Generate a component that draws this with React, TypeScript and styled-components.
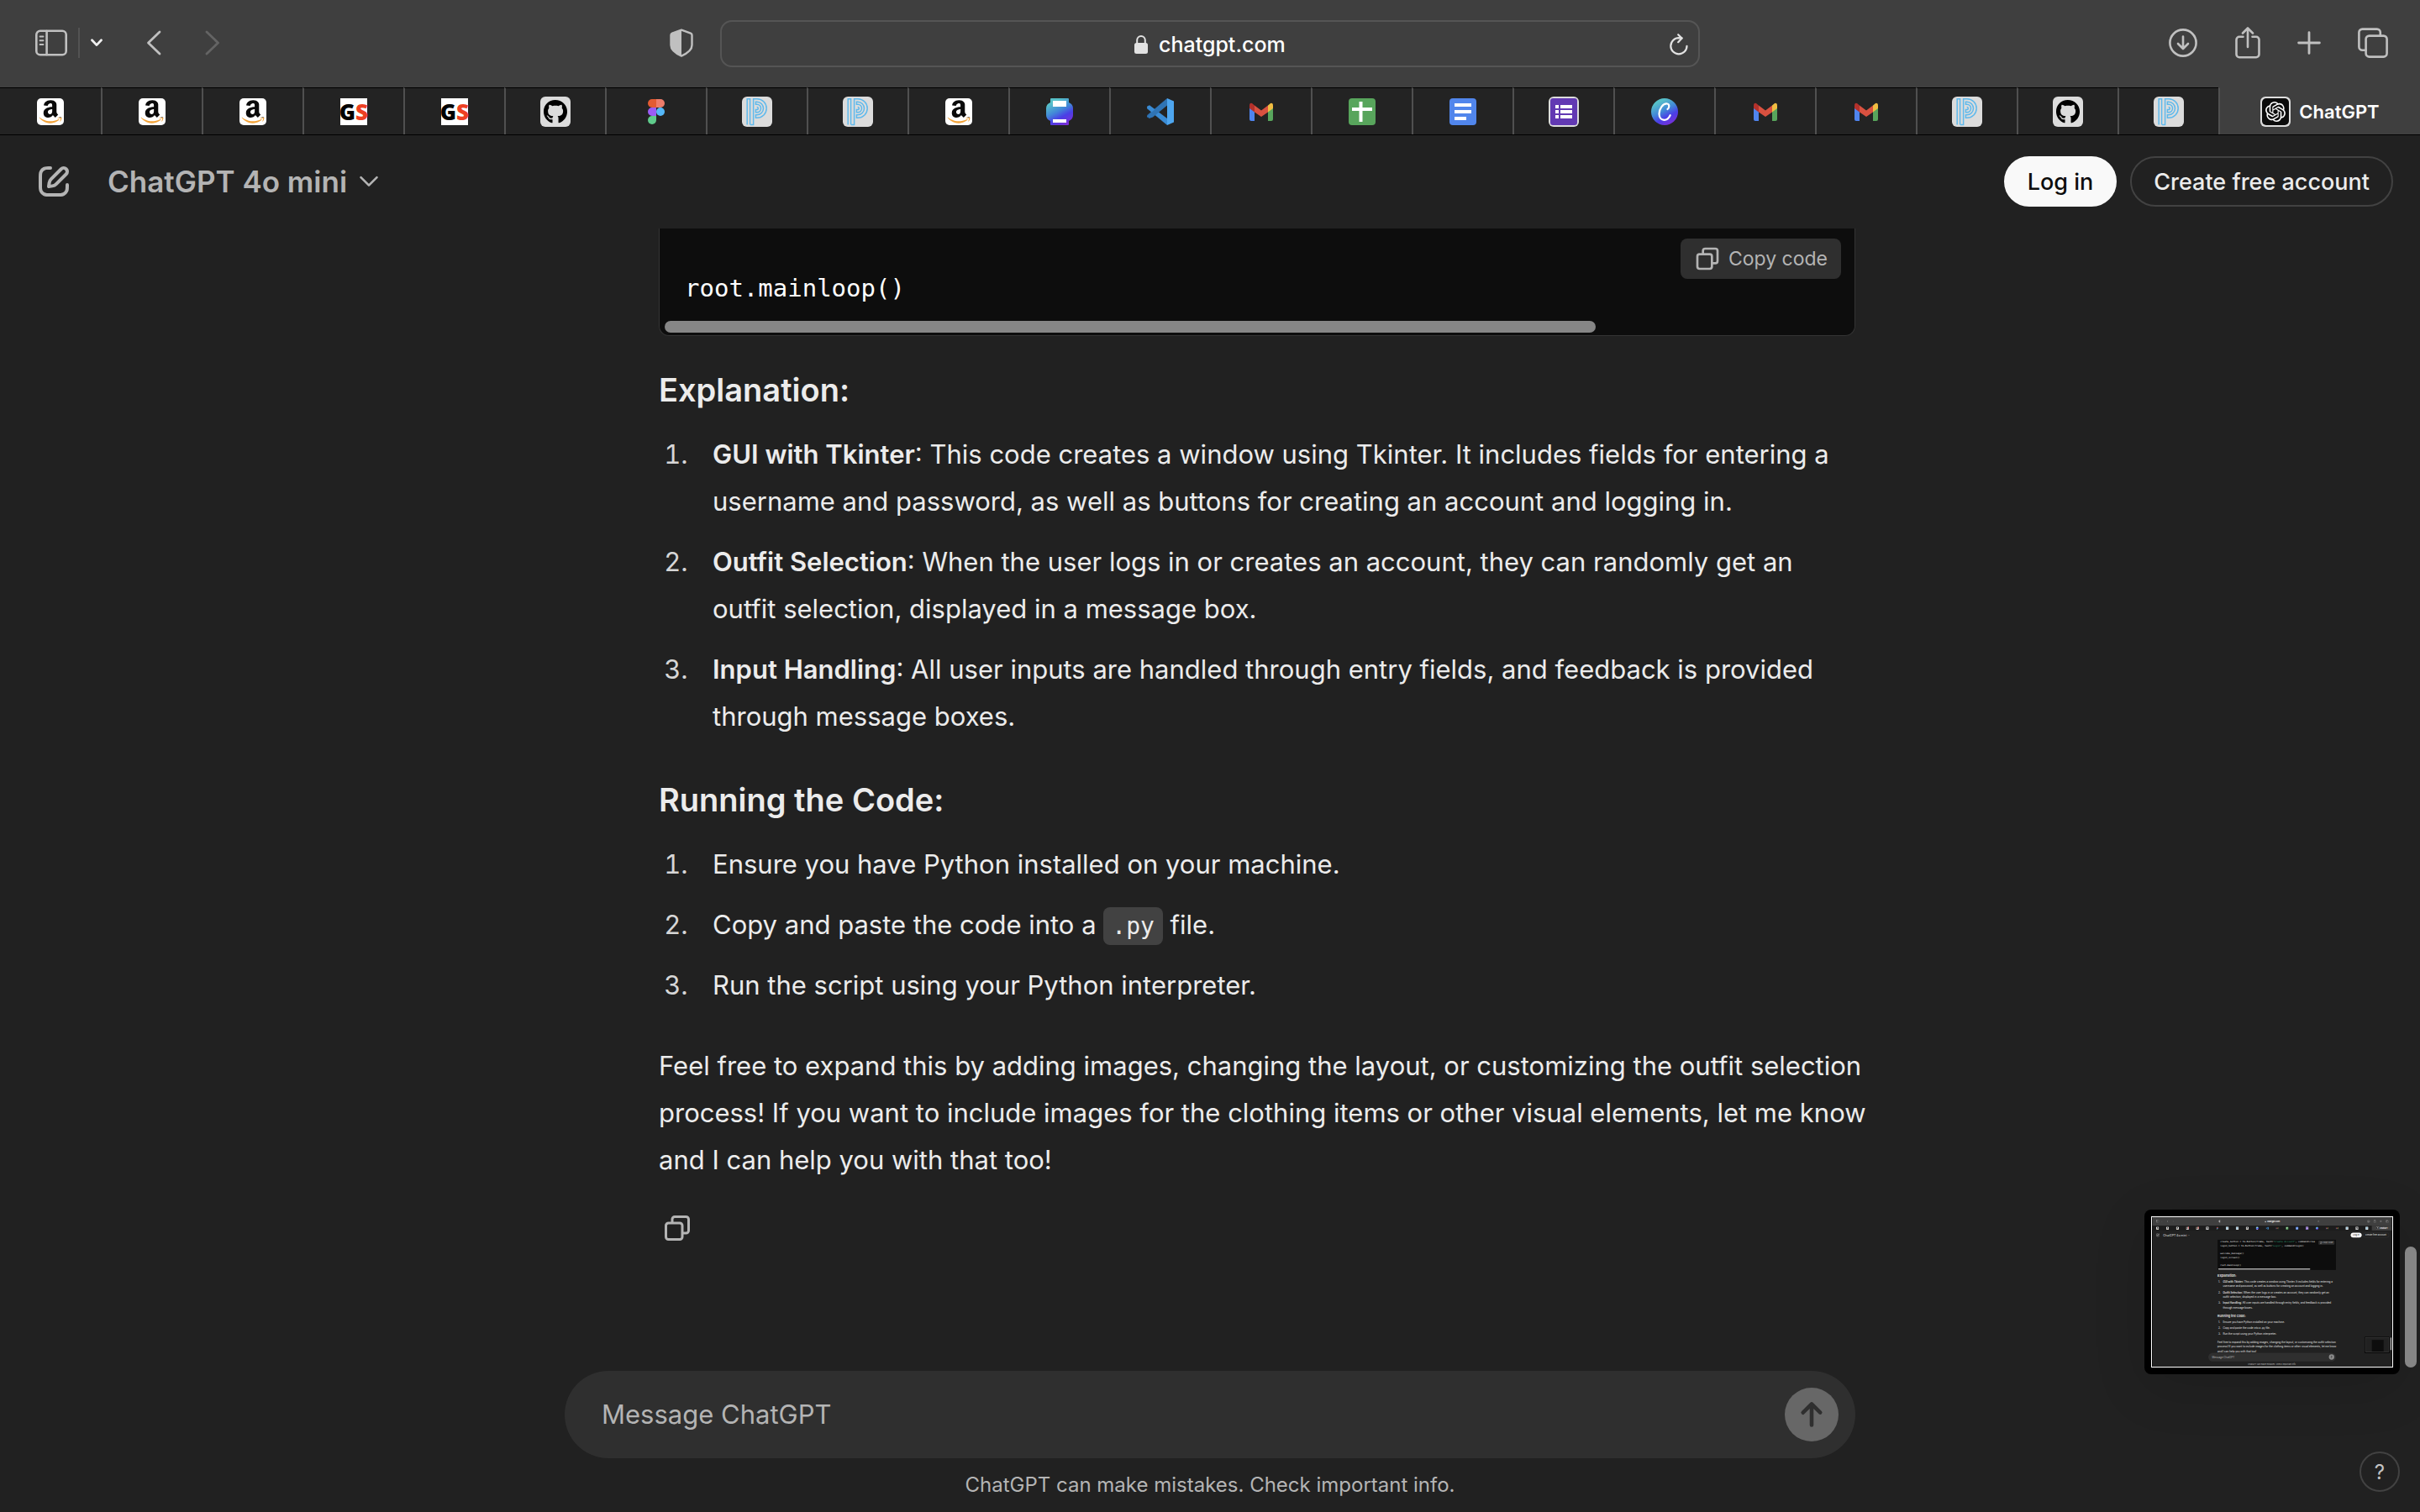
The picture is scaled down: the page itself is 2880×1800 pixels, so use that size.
import React from "react";
import styled, { createGlobalStyle } from "styled-components";
import { FaAmazon, FaGithub } from "react-icons/fa";
import { SiOpenai } from "react-icons/si";

const sans = `Inter, "Liberation Sans", sans-serif`;
const mono = `"DejaVu Sans Mono", "Liberation Mono", monospace`;

const color = {
  chrome: "#3f3f3f",
  strip: "#232323",
  page: "#212121",
  panel: "#2f2f2f",
  code: "#0d0d0d",
  text: "#ececec",
  muted: "#b4b4b4",
  line: "#424242",
  thumb: "#868686",
};

const GlobalStyle = createGlobalStyle`
  *, *::before, *::after { box-sizing: border-box; }
  body { margin: 0; background: ${color.page}; color: ${color.text}; font-family: ${sans}; }
  button, input { font: inherit; color: inherit; border: 0; background: none; padding: 0; margin: 0; outline: 0; }
  svg { display: block; flex: none; }
`;

/* ---------- Icons ---------- */

type SvgProps = React.SVGProps<SVGSVGElement>;

const line = {
  fill: "none",
  stroke: "currentColor",
  strokeLinecap: "round" as const,
  strokeLinejoin: "round" as const,
};

const SidebarIcon = (p: SvgProps) => (
  <svg width={38} height={32} viewBox="0 0 38 32" {...line} strokeWidth={2.6} {...p}>
    <rect x="1.3" y="1.8" width="35.4" height="28.4" rx="4.5" />
    <path d="M13.6 2v28" />
    <path d="M5.6 8.4h3.8M5.6 13.2h3.8M5.6 18h3.8" strokeWidth={2} />
  </svg>
);
const SmallChevron = (p: SvgProps) => (
  <svg width={14} height={10} viewBox="0 0 14 10" {...line} strokeWidth={2.8} {...p}>
    <path d="M1.5 1.8 7 7.6l5.5-5.8" />
  </svg>
);
const BackIcon = (p: SvgProps) => (
  <svg width={18} height={30} viewBox="0 0 18 30" {...line} strokeWidth={2.8} {...p}>
    <path d="M16 2 2.5 15 16 28" />
  </svg>
);
const ForwardIcon = (p: SvgProps) => (
  <svg width={18} height={30} viewBox="0 0 18 30" {...line} strokeWidth={2.8} {...p}>
    <path d="M2 2l13.5 13L2 28" />
  </svg>
);
const ShieldIcon = (p: SvgProps) => (
  <svg width={28} height={34} viewBox="0 0 28 34" {...line} strokeWidth={2.4} {...p}>
    <path d="M14 1.6 25 5.6q1.5.6 1.5 2.2v12c0 5.5-5.5 9.7-12.5 12.8C7 29.5 1.5 25.3 1.5 19.8v-12Q1.5 6.2 3 5.6Z" />
    <path d="M14 1.6v31C7 29.5 1.5 25.3 1.5 19.8v-12Q1.5 6.2 3 5.6Z" fill="currentColor" stroke="none" />
  </svg>
);
const LockIcon = (p: SvgProps) => (
  <svg width={18} height={24} viewBox="0 0 18 24" {...p}>
    <rect x="1" y="10" width="16" height="13" rx="2.5" fill="currentColor" />
    <path d="M4.2 11V6.8a4.8 4.8 0 0 1 9.6 0V11" {...line} strokeWidth={2} />
  </svg>
);
const ReloadIcon = (p: SvgProps) => (
  <svg width={22} height={26} viewBox="0 0 22 26" {...line} strokeWidth={2.2} {...p}>
    <path d="M20.5 14.8a9.6 9.6 0 1 1-9.6-9.6l3.6.2" />
    <path d="M10.2 1.2l4.4 4.4-4.4 4.6" />
  </svg>
);
const DownloadIcon = (p: SvgProps) => (
  <svg width={36} height={36} viewBox="0 0 36 36" {...line} strokeWidth={2.6} {...p}>
    <circle cx="18" cy="18" r="15.6" />
    <path d="M18 10.5v14M12 19l6 6 6-6" />
  </svg>
);
const ShareIcon = (p: SvgProps) => (
  <svg width={30} height={38} viewBox="0 0 30 38" {...line} strokeWidth={2.6} {...p}>
    <path d="M9.5 11.8H5a3.5 3.5 0 0 0-3.5 3.5v17.4A3.5 3.5 0 0 0 5 36.2h20a3.5 3.5 0 0 0 3.5-3.5V15.3a3.5 3.5 0 0 0-3.5-3.5h-4.5" />
    <path d="M15 24V1.8M9 7.5l6-6 6 6" />
  </svg>
);
const PlusIcon = (p: SvgProps) => (
  <svg width={28} height={28} viewBox="0 0 28 28" {...line} strokeWidth={2.8} {...p}>
    <path d="M14 1.6v24.8M1.6 14h24.8" />
  </svg>
);
const TabsIcon = (p: SvgProps) => (
  <svg width={36} height={36} viewBox="0 0 36 36" {...line} strokeWidth={2.6} {...p}>
    <rect x="9.6" y="9.6" width="25" height="25" rx="4" />
    <path d="M9.6 26.8H5.4a4 4 0 0 1-4-4V5.6a4 4 0 0 1 4-4h17.4a4 4 0 0 1 4 4v4" />
  </svg>
);
const ComposeIcon = (p: SvgProps) => (
  <svg width={48} height={48} viewBox="0 0 24 24" fill="currentColor" {...p}>
    <path
      fillRule="evenodd"
      d="M15.673 3.913a3.121 3.121 0 1 1 4.414 4.414l-5.937 5.937a5 5 0 0 1-2.828 1.415l-2.18.31a1 1 0 0 1-1.132-1.13l.311-2.18A5 5 0 0 1 9.736 9.85zm3 1.414a1.12 1.12 0 0 0-1.586 0l-5.937 5.937a3 3 0 0 0-.849 1.697l-.123.86.86-.122a3 3 0 0 0 1.698-.849l5.937-5.937a1.12 1.12 0 0 0 0-1.586M11 4A1 1 0 0 1 10 5c-.998 0-1.702.008-2.253.06-.54.052-.862.141-1.109.267a3 3 0 0 0-1.311 1.311c-.134.263-.226.611-.276 1.216C5.001 8.471 5 9.264 5 10.4v3.2c0 1.137 0 1.929.051 2.546.05.605.142.953.276 1.216a3 3 0 0 0 1.311 1.311c.263.134.611.226 1.216.276.617.05 1.41.051 2.546.051h3.2c1.137 0 1.929 0 2.546-.051.605-.05.953-.142 1.216-.276a3 3 0 0 0 1.311-1.311c.126-.247.215-.569.266-1.108.053-.552.06-1.256.06-2.255a1 1 0 1 1 2 .002c0 .978-.006 1.78-.069 2.442-.064.673-.192 1.27-.475 1.827a5 5 0 0 1-2.185 2.185c-.592.302-1.232.428-1.961.487C15.6 21 14.727 21 13.643 21h-3.286c-1.084 0-1.958 0-2.666-.058-.728-.06-1.369-.185-1.96-.487a5 5 0 0 1-2.186-2.185c-.302-.592-.428-1.233-.487-1.961C3 15.6 3 14.727 3 13.643v-3.286c0-1.084 0-1.958.058-2.666.06-.729.185-1.369.487-1.961A5 5 0 0 1 5.73 3.545c.556-.284 1.154-.411 1.827-.475C8.22 3.007 9.021 3 10 3a1 1 0 0 1 1 1"
    />
  </svg>
);
const ModelChevron = (p: SvgProps) => (
  <svg width={24} height={14} viewBox="0 0 24 14" {...line} strokeWidth={2.6} {...p}>
    <path d="M2.5 2.2 12 11.7l9.5-9.5" />
  </svg>
);
const CopyIcon = (p: SvgProps) => (
  <svg width={36} height={36} viewBox="0 0 24 24" fill="currentColor" {...p}>
    <path
      fillRule="evenodd"
      d="M7 5a3 3 0 0 1 3-3h9a3 3 0 0 1 3 3v9a3 3 0 0 1-3 3h-2v2a3 3 0 0 1-3 3H5a3 3 0 0 1-3-3v-9a3 3 0 0 1 3-3h2zm2 2h5a3 3 0 0 1 3 3v5h2a1 1 0 0 0 1-1V5a1 1 0 0 0-1-1h-9a1 1 0 0 0-1 1zM5 9a1 1 0 0 0-1 1v9a1 1 0 0 0 1 1h9a1 1 0 0 0 1-1v-9a1 1 0 0 0-1-1z"
    />
  </svg>
);
const SendIcon = (p: SvgProps) => (
  <svg width={64} height={64} viewBox="0 0 32 32" fill="currentColor" {...p}>
    <path d="M15.192 8.906a1.143 1.143 0 0 1 1.616 0l5.143 5.143a1.143 1.143 0 0 1-1.616 1.616l-3.192-3.192v9.813a1.143 1.143 0 0 1-2.286 0v-9.813l-3.192 3.192a1.143 1.143 0 1 1-1.616-1.616z" />
  </svg>
);

/* ---------- Favicons, all on a 36 unit square ---------- */

const Plate = () => <rect width="36" height="36" rx="6" fill="#dcdcdc" />;

const sites = {
  amazon: (
    <>
      <rect x="2" y="2" width="32" height="32" rx="5" fill="#fff" />
      <FaAmazon x={2.4} y={2.2} size={31.4} fill="url(#amazon)" />
    </>
  ),
  gs: (
    <>
      <rect x="2" y="2" width="32" height="32" fill="#fff" />
      <text x="18" y="28" textAnchor="middle" fontFamily="'Liberation Sans Narrow', 'Open Sans', sans-serif" fontWeight="800" fontSize="26">
        <tspan fill="#000">G</tspan>
        <tspan fill="#ee4023">S</tspan>
      </text>
    </>
  ),
  github: (
    <>
      <Plate />
      <FaGithub x={3.5} y={3.5} size={29} fill="#000" />
    </>
  ),
  figma: (
    <>
      <path d="M18 3h-5a5 5 0 0 0 0 10h5z" fill="#e35b33" />
      <path d="M18 3h5a5 5 0 0 1 0 10h-5z" fill="#ee7d6b" />
      <path d="M18 13h-5a5 5 0 0 0 0 10h5z" fill="#9b5cf6" />
      <circle cx="23" cy="18" r="5" fill="#55b8f9" />
      <path d="M18 23h-5a5 5 0 1 0 5 5z" fill="#5fcb8b" />
    </>
  ),
  school: (
    <>
      <Plate />
      <g fill="none" stroke="#5fb9ec" strokeWidth="1.5">
        <path d="M6.2 33.5V2.8h3.4v30.7" />
        <path d="M10 33.4h3.6V2.8H18a11.2 11.2 0 0 1 0 22.4h-1.6v-3.4h1.3a7.8 7.8 0 0 0 0-15.6h-1.3v3h1.3a4.8 4.8 0 0 1 0 9.6h-1.3v-3.2h1.3a1.6 1.6 0 0 0 0-3.2" />
      </g>
    </>
  ),
  printer: (
    <>
      <path d="M8 2h20q1 0 1 1v4q5 2 5 7v8q0 5-5 7v4q0 1-1 1H8q-1 0-1-1v-4q-5-2-5-7v-8q0-5 5-7V3q0-1 1-1z" fill="url(#canva)" />
      <path d="M10 5h16v7H10zM10 27h16v4H10z" fill="#fff" />
    </>
  ),
  vscode: (
    <>
      <path d="M26 2 8 20.5 2.5 25q-1-1-.2-3L26 2z" fill="#2b6cab" />
      <path d="M26 34 2.4 14.5q-1-2 0-3L5 10.2 26 26z" fill="#3a8bd4" />
      <path d="M26 2v8.5L9 24.5 4.5 26l-2.3-2.5z" fill="#2f74b5" />
      <path d="M26 2 34 5.5v25L26 34z" fill="#4ea6ef" />
    </>
  ),
  gmail: (
    <>
      <path d="M4 13v14q0 2 2 2h4V17z" fill="#4f84ee" />
      <path d="M32 13v14q0 2-2 2h-4V17z" fill="#58a55c" />
      <path d="M26 10.5 29 8q3-1 3 3v3l-6 4.5z" fill="#f1bd42" />
      <path d="M10 10.5 7 8q-3-1-3 3v3l6 4.5z" fill="#b3312b" />
      <path d="M10 10.5v8L18 24l8-5.5v-8L18 16.5z" fill="#d95140" />
    </>
  ),
  sheets: (
    <>
      <rect x="2" y="2" width="32" height="32" rx="4" fill="#58a55c" />
      <path d="M14.5 6h4v24h-4zM6 13h24v4H6z" fill="#fff" />
    </>
  ),
  docs: (
    <>
      <rect x="2" y="2" width="32" height="32" rx="4" fill="#5186ec" />
      <path d="M8 8h20v4H8zM8 16h20v4H8zM8 24h14v4H8z" fill="#fff" />
    </>
  ),
  forms: (
    <>
      <Plate />
      <rect x="2" y="2" width="32" height="32" rx="3" fill="#6239b3" />
      <path d="M8 10h4v4H8zM14 10h14v4H14zM8 16h4v4H8zM14 16h14v4H14zM8 22h4v4H8zM14 22h14v4H14z" fill="#fff" />
    </>
  ),
  canva: (
    <>
      <circle cx="18" cy="18" r="16" fill="url(#canva)" />
      <path
        d="M21.5 15c2-1 3-6-.5-6.5-5-.5-9.5 6-9.5 12 0 5 3 7.3 6 7.3 3.5 0 6-3 7.2-5.6"
        fill="none"
        stroke="#fff"
        strokeWidth="2.2"
        strokeLinecap="round"
      />
    </>
  ),
  openai: (
    <>
      <Plate />
      <rect x="2" y="2" width="32" height="32" rx="5" fill="#0c0c0c" />
      <SiOpenai x={6} y={6} size={24} fill="#fff" />
    </>
  ),
};

type Site = keyof typeof sites;

const Favicon = ({ site, ...p }: { site: Site } & SvgProps) => (
  <svg width={36} height={36} viewBox="0 0 36 36" aria-hidden="true" {...p}>
    {sites[site]}
  </svg>
);

const GradientSheet = styled.svg`
  position: absolute;
  width: 0;
  height: 0;
`;

const Gradients = () => (
  <GradientSheet aria-hidden="true">
    <defs>
      <linearGradient id="amazon" gradientUnits="userSpaceOnUse" x1="0" y1="0" x2="0" y2="512">
        <stop offset="0.72" stopColor="#0a0a0a" />
        <stop offset="0.72" stopColor="#f2a33a" />
      </linearGradient>
      <linearGradient id="canva" gradientUnits="userSpaceOnUse" x1="10" y1="3" x2="26" y2="33">
        <stop offset="0.1" stopColor="#57c1c9" />
        <stop offset="0.45" stopColor="#4287d8" />
        <stop offset="0.7" stopColor="#4a3fe6" />
        <stop offset="1" stopColor="#7a2fd8" />
      </linearGradient>
    </defs>
  </GradientSheet>
);

const openTabs: { site: Site; title: string }[] = [
  { site: "amazon", title: "Amazon" },
  { site: "amazon", title: "Amazon" },
  { site: "amazon", title: "Amazon" },
  { site: "gs", title: "GS" },
  { site: "gs", title: "GS" },
  { site: "github", title: "GitHub" },
  { site: "figma", title: "Figma" },
  { site: "school", title: "PowerSchool" },
  { site: "school", title: "PowerSchool" },
  { site: "amazon", title: "Amazon" },
  { site: "printer", title: "Print" },
  { site: "vscode", title: "Visual Studio Code" },
  { site: "gmail", title: "Gmail" },
  { site: "sheets", title: "Sheets" },
  { site: "docs", title: "Docs" },
  { site: "forms", title: "Forms" },
  { site: "canva", title: "Canva" },
  { site: "gmail", title: "Gmail" },
  { site: "gmail", title: "Gmail" },
  { site: "school", title: "PowerSchool" },
  { site: "github", title: "GitHub" },
  { site: "school", title: "PowerSchool" },
];

/* ---------- Browser chrome ---------- */

const Page = styled.div`
  position: relative;
  display: flex;
  flex-direction: column;
  height: 100vh;
  overflow: hidden;
`;

const Toolbar = styled.header`
  display: grid;
  grid-template-columns: 1fr 1166px 1fr;
  align-items: center;
  height: 104px;
  flex: none;
  background: ${color.chrome};
  color: #c0c0c0;
`;

const ToolGroup = styled.div<{ $gap: number }>`
  display: flex;
  align-items: center;
  gap: ${(p) => p.$gap}px;
`;

const ToolbarLeft = styled(ToolGroup)`
  padding: 0 32px 2px 42px;
`;

const ToolbarRight = styled(ToolGroup)`
  justify-content: flex-end;
  padding: 0 38px 2px 0;
`;

const IconButton = styled.button<{ $tone?: string; $push?: boolean }>`
  display: flex;
  flex: none;
  color: ${(p) => p.$tone ?? "inherit"};
  margin-left: ${(p) => (p.$push ? "auto" : 0)};
`;

const Divider = styled.span`
  width: 2px;
  height: 36px;
  background: #535353;
`;

const AddressBar = styled.div`
  display: grid;
  grid-template-columns: 1fr auto 1fr;
  align-items: center;
  height: 56px;
  padding: 2px 12px 0;
  border: 2px solid #555;
  border-radius: 14px;
  color: #e2e2e2;
`;

const Address = styled.label`
  grid-column: 2;
  display: flex;
  align-items: center;
  gap: 12px;
`;

const AddressInput = styled.input`
  width: 152px;
  font-size: 25px;
  line-height: 32px;
  font-weight: 500;
  color: #fff;
`;

const ReloadSlot = styled.div`
  display: flex;
  justify-content: flex-end;
`;

const TabStrip = styled.nav`
  display: grid;
  grid-template-columns: repeat(${openTabs.length}, minmax(0, 1fr)) minmax(0, 2fr);
  height: 57px;
  flex: none;
  border-bottom: 1px solid #000;
  background: ${color.strip};
`;

const Tab = styled.button<{ $active?: boolean }>`
  display: flex;
  align-items: center;
  justify-content: center;
  gap: 10px;
  border-top: 1px solid ${(p) => (p.$active ? color.chrome : "#000")};
  border-left: 2px solid #505050;
  background: ${(p) => (p.$active ? color.chrome : "transparent")};
  color: #fff;
  font-size: 22px;
  font-weight: 600;

  &:first-child {
    border-left: 0;
  }
`;

/* ---------- ChatGPT page ---------- */

const AppBar = styled.div`
  display: flex;
  align-items: center;
  justify-content: space-between;
  height: 111px;
  flex: none;
  padding: 0 32px 1px 40px;
  color: ${color.muted};
`;

const ModelButton = styled.button`
  display: flex;
  align-items: center;
  gap: 14px;
  font-size: 35px;
  line-height: 48px;
  font-weight: 600;
`;

const PillButton = styled.button<{ $solid?: boolean }>`
  height: 60px;
  padding: 0 26px;
  border: 2px solid ${(p) => (p.$solid ? "#f9f9f9" : color.line)};
  border-radius: 30px;
  background: ${(p) => (p.$solid ? "#f9f9f9" : "transparent")};
  color: ${(p) => (p.$solid ? color.code : color.text)};
  font-size: 27px;
  font-weight: 500;
`;

const Thread = styled.main`
  flex: 1;
  min-height: 0;
  overflow: hidden;
`;

const Column = styled.div`
  max-width: 1536px;
  margin: 0 auto;
`;

const Answer = styled.article`
  padding-left: 112px;
  font-size: 31px;
  line-height: 56px;
`;

const CodeBlock = styled.div`
  display: flex;
  flex-direction: column;
  height: 128px;
  padding: 12px 6px 3px;
  border: 1px solid #343434;
  border-top: 0;
  border-radius: 0 0 12px 12px;
  background: ${color.code};
`;

const CodeRow = styled.div`
  display: flex;
  flex: 1;
  align-items: flex-start;
  justify-content: space-between;
  padding: 0 10px 0 24px;
`;

const Pre = styled.pre`
  margin: 0;
  padding-top: 39px;
  font-family: ${mono};
  font-size: 29px;
  line-height: 40px;
  color: #fff;
`;

const CopyCode = styled.button`
  display: flex;
  align-items: center;
  gap: 9px;
  height: 48px;
  padding: 0 16px;
  border-radius: 8px;
  background: ${color.panel};
  color: ${color.muted};
  font-size: 23px;
`;

const CodeScroll = styled.div`
  width: 1108px;
  max-width: 100%;
  height: 14px;
  border-radius: 7px;
  background: ${color.thumb};
`;

const Heading = styled.h3`
  margin: 39px 0 17px;
  font-size: 38px;
  line-height: 64px;
  font-weight: 600;

  ${CodeBlock} + & {
    margin-top: 32px;
  }
`;

const Steps = styled.ol`
  display: flex;
  flex-direction: column;
  gap: 16px;
  margin: 0;
  padding-left: 43px;
`;

const Step = styled.li`
  padding-left: 21px;

  &::marker {
    color: #d6d6d6;
  }
`;

const Strong = styled.strong`
  font-weight: 600;
`;

const InlineCode = styled.code`
  padding: 6px 10px;
  border-radius: 8px;
  background: ${color.line};
  font-family: ${mono};
  font-size: 28px;
  line-height: 1;
`;

const Closing = styled.p`
  margin: 40px -16px 35px 0;
`;

const CopyAnswer = styled(IconButton)`
  padding-left: 4px;
  color: ${color.muted};
`;

const ComposerColumn = styled(Column)`
  width: 100%;
  flex: none;
`;

const Composer = styled.form`
  display: flex;
  align-items: center;
  height: 104px;
  padding: 0 20px 0 44px;
  border-radius: 52px;
  background: ${color.panel};
`;

const MessageInput = styled.input`
  flex: 1;
  min-width: 0;
  font-size: 31px;
  line-height: 48px;

  &::placeholder {
    color: ${color.muted};
    opacity: 1;
  }
`;

const SendButton = styled.button`
  width: 64px;
  height: 64px;
  border-radius: 50%;
  background: #676767;
  color: ${color.panel};
`;

const Disclaimer = styled.p`
  flex: none;
  height: 64px;
  margin: 0;
  font-size: 24px;
  line-height: 64px;
  text-align: center;
  color: ${color.muted};
`;

const HelpButton = styled.button`
  position: absolute;
  right: 24px;
  bottom: 24px;
  width: 48px;
  height: 48px;
  border: 2px solid ${color.line};
  border-radius: 50%;
  color: #c4c4c4;
  font-size: 24px;
`;

const PageScroll = styled.div`
  position: absolute;
  right: 4px;
  bottom: 172px;
  width: 14px;
  height: 144px;
  border-radius: 7px;
  background: ${color.thumb};
`;

const CapturePreview = styled.button`
  position: absolute;
  right: 24px;
  bottom: 164px;
  padding: 8px;
  border-radius: 8px;
  background: #000;
  box-shadow: 0 16px 64px rgba(0, 0, 0, 0.12);
`;

const CaptureFrame = styled.svg`
  width: 288px;
  height: 180px;
  border: 1px solid #fff;
`;

/* ---------- Floating screen capture thumbnail ---------- */

const captureText: { x: number; y: number; text: string; bold?: boolean }[] = [
  { x: 784, y: 714, text: "Explanation:", bold: true },
  { x: 792, y: 788, text: "1." },
  { x: 848, y: 844, text: "username and password, as well as buttons for creating an account and logging in." },
  { x: 792, y: 916, text: "2." },
  { x: 848, y: 972, text: "outfit selection, displayed in a message box." },
  { x: 792, y: 1044, text: "3." },
  { x: 848, y: 1100, text: "through message boxes." },
  { x: 784, y: 1202, text: "Running the Code:", bold: true },
  { x: 792, y: 1276, text: "1." },
  { x: 848, y: 1276, text: "Ensure you have Python installed on your machine." },
  { x: 792, y: 1348, text: "2." },
  { x: 848, y: 1348, text: "Copy and paste the code into a  .py  file." },
  { x: 792, y: 1420, text: "3." },
  { x: 848, y: 1420, text: "Run the script using your Python interpreter." },
  { x: 784, y: 1516, text: "Feel free to expand this by adding images, changing the layout, or customizing the outfit selection" },
  { x: 784, y: 1572, text: "process! If you want to include images for the clothing items or other visual elements, let me know" },
  { x: 784, y: 1628, text: "and I can help you with that too!" },
];

const capturePoints = [
  { y: 788, lead: "GUI with Tkinter", rest: ": This code creates a window using Tkinter. It includes fields for entering a" },
  { y: 916, lead: "Outfit Selection", rest: ": When the user logs in or creates an account, they can randomly get an" },
  { y: 1044, lead: "Input Handling", rest: ": All user inputs are handled through entry fields, and feedback is provided" },
];

const Capture = () => (
  <CaptureFrame viewBox="0 0 2880 1800" fontFamily={sans} fontSize="31" fill="#e4e4e4" aria-hidden="true">
    <rect width="2880" height="1800" fill={color.page} />
    <rect width="2880" height="104" fill={color.chrome} />
    <g color="#c0c0c0">
      <SidebarIcon x={42} y={34} />
      <SmallChevron x={107} y={47} />
      <BackIcon x={173} y={36} />
      <ForwardIcon x={244} y={36} color="#6a6a6a" />
      <ShieldIcon x={797} y={34} />
      <LockIcon x={1351} y={41} />
      <ReloadIcon x={1988} y={38} />
      <DownloadIcon x={2582} y={33} />
      <ShareIcon x={2660} y={31} />
      <PlusIcon x={2734} y={36} />
      <TabsIcon x={2806} y={33} />
    </g>
    <text x="1381" y="61" fontSize="25" fontWeight="600" fill="#fff">chatgpt.com</text>
    <rect y="104" width="2640" height="56" fill="#1c1c1c" />
    <rect x="2640" y="104" width="240" height="56" fill={color.chrome} />
    {openTabs.map((tab, i) => (
      <Favicon key={i} site={tab.site} x={43 + i * 120} y={115} />
    ))}
    <Favicon site="openai" x={2692} y={115} />
    <text x="2737" y="141" fontSize="22" fontWeight="600" fill="#fff">ChatGPT</text>
    <g color={color.muted} fill={color.muted}>
      <ComposeIcon x={40} y={192} />
      <text x="128" y="228" fontSize="35" fontWeight="600">ChatGPT 4o mini</text>
      <ModelChevron x={427} y={210} />
    </g>
    <rect x="2386" y="186" width="132" height="60" rx="30" fill="#fff" />
    <text x="2412" y="226" fontSize="27" fill="#000">Log in</text>
    <rect x="2535" y="187" width="312" height="58" rx="29" fill="none" stroke={color.line} strokeWidth="3" />
    <text x="2562" y="226" fontSize="27">Create free account</text>

    <rect x="784" y="272" width="1424" height="364" fill={color.code} />
    <g fontFamily={mono} fontSize="28">
      <text x="816" y="302">
        create_button = tk.Button(frame, text=<tspan fill="#2f9c74">"Create Account"</tspan>, command=crea
      </text>
      <text x="816" y="350">
        login_button = tk.Button(frame, text=<tspan fill="#2f9c74">"Login"</tspan>, command=login)
      </text>
      <text x="816" y="446">welcome_message()</text>
      <text x="816" y="494">login_screen()</text>
      <text x="816" y="588">root.mainloop()</text>
    </g>
    <rect x="1998" y="284" width="193" height="48" rx="8" fill={color.panel} />
    <CopyIcon x={2014} y={292} width={32} height={32} color={color.muted} />
    <text x="2054" y="317" fontSize="23" fill={color.muted}>Copy code</text>
    <rect x="791" y="618" width="1108" height="14" rx="7" fill="#a8a8a8" />

    {capturePoints.map((point) => (
      <text key={point.y} x="848" y={point.y}>
        <tspan fontWeight="600">{point.lead}</tspan>
        {point.rest}
      </text>
    ))}
    {captureText.map((row, i) => (
      <text key={i} x={row.x} y={row.y} fontSize={row.bold ? 38 : 31} fontWeight={row.bold ? 600 : 400}>
        {row.text}
      </text>
    ))}

    <rect x="672" y="1632" width="1536" height="104" rx="52" fill={color.panel} />
    <text x="716" y="1695" fill={color.muted}>Message ChatGPT</text>
    <circle cx="2156" cy="1684" r="32" fill="#8a8a8a" />
    <SendIcon x={2124} y={1652} color={color.panel} />
    <text x="1440" y="1776" fontSize="24" textAnchor="middle" fill={color.muted}>
      ChatGPT can make mistakes. Check important info.
    </text>
    <rect x="2552" y="1440" width="304" height="196" rx="8" fill="#000" />
    <rect x="2562" y="1450" width="284" height="176" fill={color.page} stroke="#555" strokeWidth="4" />
    <rect x="2640" y="1478" width="142" height="140" fill={color.code} />
    <rect x="2864" y="1450" width="12" height="150" fill="#bbb" />
  </CaptureFrame>
);

export default function App() {
  return (
    <Page>
      <GlobalStyle />
      <Gradients />

      <Toolbar>
        <ToolbarLeft $gap={52}>
          <ToolGroup $gap={13}>
            <IconButton aria-label="Show sidebar"><SidebarIcon /></IconButton>
            <Divider />
            <IconButton aria-label="Tab groups" $tone="#f0f0f0"><SmallChevron /></IconButton>
          </ToolGroup>
          <IconButton aria-label="Back"><BackIcon /></IconButton>
          <IconButton aria-label="Forward" $tone="#646464"><ForwardIcon /></IconButton>
          <IconButton aria-label="Privacy report" $push><ShieldIcon /></IconButton>
        </ToolbarLeft>
        <AddressBar>
          <Address>
            <LockIcon />
            <AddressInput aria-label="Address" defaultValue="chatgpt.com" />
          </Address>
          <ReloadSlot>
            <IconButton aria-label="Reload"><ReloadIcon /></IconButton>
          </ReloadSlot>
        </AddressBar>
        <ToolbarRight $gap={44}>
          <IconButton aria-label="Downloads"><DownloadIcon /></IconButton>
          <IconButton aria-label="Share"><ShareIcon /></IconButton>
          <IconButton aria-label="New tab"><PlusIcon /></IconButton>
          <IconButton aria-label="Tab overview"><TabsIcon /></IconButton>
        </ToolbarRight>
      </Toolbar>

      <TabStrip aria-label="Open tabs">
        {openTabs.map((tab, i) => (
          <Tab key={i} aria-label={tab.title}>
            <Favicon site={tab.site} />
          </Tab>
        ))}
        <Tab $active>
          <Favicon site="openai" />
          ChatGPT
        </Tab>
      </TabStrip>

      <AppBar>
        <ToolGroup $gap={40}>
          <IconButton aria-label="New chat"><ComposeIcon /></IconButton>
          <ModelButton>
            ChatGPT 4o mini
            <ModelChevron />
          </ModelButton>
        </ToolGroup>
        <ToolGroup $gap={16}>
          <PillButton $solid>Log in</PillButton>
          <PillButton>Create free account</PillButton>
        </ToolGroup>
      </AppBar>

      <Thread>
        <Column>
          <Answer>
            <CodeBlock>
              <CodeRow>
                <Pre><code>root.mainloop()</code></Pre>
                <CopyCode>
                  <CopyIcon width={32} height={32} />
                  Copy code
                </CopyCode>
              </CodeRow>
              <CodeScroll />
            </CodeBlock>

            <Heading>Explanation:</Heading>
            <Steps>
              <Step>
                <Strong>GUI with Tkinter</Strong>: This code creates a window using Tkinter. It includes fields for
                entering a username and password, as well as buttons for creating an account and logging in.
              </Step>
              <Step>
                <Strong>Outfit Selection</Strong>: When the user logs in or creates an account, they can randomly get
                an outfit selection, displayed in a message box.
              </Step>
              <Step>
                <Strong>Input Handling</Strong>: All user inputs are handled through entry fields, and feedback is
                provided through message boxes.
              </Step>
            </Steps>

            <Heading>Running the Code:</Heading>
            <Steps>
              <Step>Ensure you have Python installed on your machine.</Step>
              <Step>
                Copy and paste the code into a <InlineCode>.py</InlineCode> file.
              </Step>
              <Step>Run the script using your Python interpreter.</Step>
            </Steps>

            <Closing>
              Feel free to expand this by adding images, changing the layout, or customizing the outfit selection
              process! If you want to include images for the clothing items or other visual elements, let me know and I
              can help you with that too!
            </Closing>
            <CopyAnswer aria-label="Copy"><CopyIcon /></CopyAnswer>
          </Answer>
        </Column>
      </Thread>

      <ComposerColumn>
        <Composer onSubmit={(e) => e.preventDefault()}>
          <MessageInput aria-label="Message ChatGPT" placeholder="Message ChatGPT" />
          <SendButton aria-label="Send message"><SendIcon /></SendButton>
        </Composer>
      </ComposerColumn>
      <Disclaimer>ChatGPT can make mistakes. Check important info.</Disclaimer>

      <CapturePreview aria-label="Screen capture preview"><Capture /></CapturePreview>
      <PageScroll />
      <HelpButton aria-label="Help">?</HelpButton>
    </Page>
  );
}
